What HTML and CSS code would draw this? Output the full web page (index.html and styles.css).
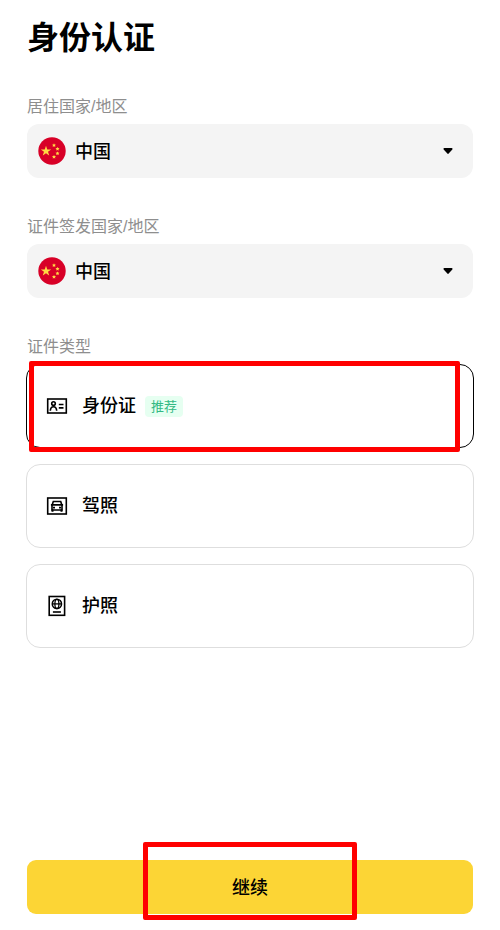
FILE: index.html
```html
<!DOCTYPE html>
<html lang="zh-CN">
<head>
<meta charset="utf-8">
<meta name="viewport" content="width=device-width, initial-scale=1">
<title>身份认证</title>
<link rel="stylesheet" href="styles.css">
</head>
<body>
<svg class="defs" aria-hidden="true">
  <symbol id="flag" viewBox="0 0 28 28">
    <circle cx="14" cy="14" r="13.7" fill="#d80027"/>
    <g fill="#ffda44">
      <path d="M8 8.800l1.250 3.700h3.900l-3.150 2.300 1.200 3.700L8 16.200l-3.200 2.300L6 14.800l-3.150-2.300h3.900z"/>
      <path d="M16 6.300l.6 1.200 1.400.2-1 .9.300 1.400-1.300-.7-1.300.7.3-1.400-1-.9 1.400-.2z"/>
      <path d="M19.500 9.900l.6 1.200 1.400.2-1 .9.300 1.400-1.300-.7-1.300.7.3-1.400-1-.9 1.400-.2z"/>
      <path d="M19.500 14.400l.6 1.200 1.400.2-1 .9.300 1.400-1.300-.7-1.300.7.3-1.400-1-.9 1.400-.2z"/>
      <path d="M16 17.900l.6 1.200 1.400.2-1 .9.300 1.400-1.300-.7-1.300.7.3-1.400-1-.9 1.400-.2z"/>
    </g>
  </symbol>
  <symbol id="caret" viewBox="0 0 10 8">
    <path d="M1.300 1h7.400c.8 0 1.100.8.6 1.400L5.700 6.600c-.4.4-1 .4-1.400 0L.7 2.400C.2 1.800.5 1 1.300 1z" fill="#000"/>
  </symbol>
</svg>
<main class="page">
  <h1 class="title">身份认证</h1>
  <form class="form">
    <div class="field">
      <label class="label" for="residence">居住国家/地区</label>
      <div class="picker">
        <svg class="flag" aria-hidden="true"><use href="#flag"/></svg>
        <select class="select" id="residence"><option>中国</option></select>
        <svg class="caret" aria-hidden="true"><use href="#caret"/></svg>
      </div>
    </div>
    <div class="field">
      <label class="label" for="issuer">证件签发国家/地区</label>
      <div class="picker">
        <svg class="flag" aria-hidden="true"><use href="#flag"/></svg>
        <select class="select" id="issuer"><option>中国</option></select>
        <svg class="caret" aria-hidden="true"><use href="#caret"/></svg>
      </div>
    </div>
    <fieldset class="types">
      <legend class="label">证件类型</legend>
      <div class="options">
        <label class="option">
          <input class="radio" type="radio" name="doc" checked>
          <svg class="icon" viewBox="0 0 22 22" aria-hidden="true">
            <g fill="none" stroke="#000" stroke-width="1.600">
              <rect x="1.700" y="4" width="18.600" height="14"/>
              <circle cx="7.500" cy="8.500" r="1.800"/>
              <path d="M4.300 15.800c.2-3 1.300-4.100 3.200-4.100s3 1.100 3.200 4.100M12.800 9.500h4.700M12.800 12.900h4.700"/>
            </g>
          </svg>
          <span class="name">身份证</span>
          <span class="tag">推荐</span>
          <span class="mark"></span>
        </label>
        <label class="option">
          <input class="radio" type="radio" name="doc">
          <svg class="icon" viewBox="0 0 22 22" aria-hidden="true">
            <g fill="none" stroke="#000" stroke-width="1.600">
              <rect x="1.700" y="3" width="18.600" height="16"/>
              <path d="M6 10.500l1.300-4h7.400l1.300 4v4.500H6zM4.900 9.900h12.200"/>
              <path d="M6.500 14.500v2.200M15.500 14.500v2.200" stroke-width="2"/>
              <path d="M7 12.600h2M13 12.600h2"/>
            </g>
          </svg>
          <span class="name">驾照</span>
        </label>
        <label class="option">
          <input class="radio" type="radio" name="doc">
          <svg class="icon" viewBox="0 0 22 22" aria-hidden="true">
            <g fill="none" stroke="#000" stroke-width="1.600">
              <rect x="3.200" y="1.500" width="15.400" height="18.800"/>
              <circle cx="10.900" cy="8.900" r="4.600"/>
              <g stroke-width="1.300">
                <ellipse cx="10.900" cy="8.900" rx="2" ry="4.600"/>
                <path d="M6.300 8.900h9.200"/>
              </g>
              <path d="M6.900 17h8"/>
            </g>
          </svg>
          <span class="name">护照</span>
        </label>
      </div>
    </fieldset>
    <div class="actions">
      <button class="submit" type="button">继续</button>
      <span class="mark mark-submit"></span>
    </div>
  </form>
</main>
</body>
</html>
```
FILE: styles.css
```css
* {
  box-sizing: border-box;
}

body {
  margin: 0;
  background: #fff;
  color: #000;
  font-family: "Noto Sans CJK SC", sans-serif;
}

.defs {
  position: absolute;
  width: 0;
  height: 0;
}

.page {
  display: flex;
  flex-direction: column;
  min-height: 100vh;
  padding: 15px 27px 16px;
}

.title {
  margin: 0 0 40px;
  font-size: 32px;
  line-height: 40px;
  font-weight: 700;
}

.form {
  display: flex;
  flex: 1;
  flex-direction: column;
}

.field {
  margin-bottom: 37px;
}

.label {
  display: block;
  padding: 0;
  color: #8e8e8e;
  font: 16px/24px "Liberation Sans", "Noto Sans CJK SC", sans-serif;
}

.field .label {
  margin-bottom: 5px;
}

.picker {
  display: grid;
  grid-template-columns: 48px 1fr 30px;
  align-items: center;
  height: 54px;
  border-radius: 12px;
  background: #f4f4f4;
}

.flag {
  grid-area: 1 / 1;
  width: 28px;
  height: 28px;
  margin-left: 11px;
  pointer-events: none;
  z-index: 1;
}

.select {
  grid-area: 1 / 1 / 2 / 4;
  width: 100%;
  height: 100%;
  padding: 0 48px 2px;
  border: 0;
  border-radius: 12px;
  background: transparent;
  color: #000;
  font: 500 18px "Noto Sans CJK SC", sans-serif;
  appearance: none;
}

.caret {
  grid-area: 1 / 3;
  width: 10px;
  height: 8px;
  pointer-events: none;
}

.types {
  margin: 0 -1px 32px;
  padding: 0;
  border: 0;
}

.types .label {
  margin: 0 1px 5px;
}

.options {
  display: grid;
  gap: 16px;
}

.option {
  position: relative;
  display: flex;
  align-items: center;
  height: 84px;
  padding: 0 19px;
  border: 1px solid #dedede;
  border-radius: 14px;
}

.option:has(.radio:checked) {
  border-color: #000;
}

.radio {
  position: absolute;
  inset: 0;
  margin: 0;
  opacity: 0;
}

.icon {
  width: 22px;
  height: 22px;
  margin-right: 14px;
}

.name {
  padding-bottom: 4px;
  font-size: 18px;
  line-height: 28px;
  font-weight: 500;
}

.tag {
  margin-left: 9px;
  padding: 0 6px 1px;
  border-radius: 4px;
  background: #e6fff1;
  color: #32b983;
  font-size: 13px;
  line-height: 20px;
}

.mark {
  position: absolute;
  inset: -4px 13px -5px 2px;
  border: 5px solid #f00;
  border-radius: 2px;
  pointer-events: none;
}

.actions {
  position: relative;
  margin-top: auto;
}

.mark-submit {
  inset: -18px 26% -6px;
}

.submit {
  display: block;
  width: 100%;
  height: 54px;
  padding: 0 0 2px;
  border: 0;
  border-radius: 9px;
  background: #fcd535;
  color: #000;
  font: 500 18px "Noto Sans CJK SC", sans-serif;
}
```
